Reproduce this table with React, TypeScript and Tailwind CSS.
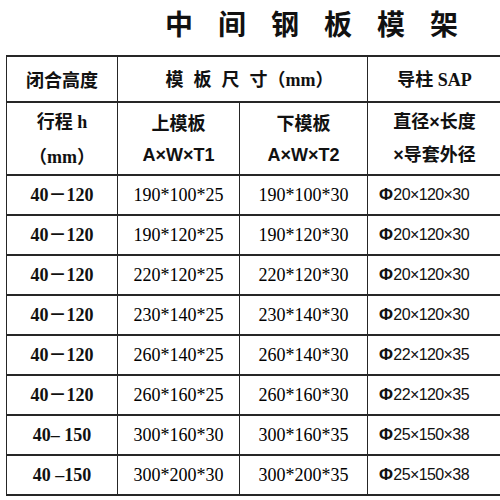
import React from 'react'

interface Row {
  stroke: string;
  upper: string;
  lower: string;
  pin: string;
}

const rows: Row[] = [
  { stroke: '40－120', upper: '190*100*25', lower: '190*100*30', pin: '20×120×30' },
  { stroke: '40－120', upper: '190*120*25', lower: '190*120*30', pin: '20×120×30' },
  { stroke: '40－120', upper: '220*120*25', lower: '220*120*30', pin: '20×120×30' },
  { stroke: '40－120', upper: '230*140*25', lower: '230*140*30', pin: '20×120×30' },
  { stroke: '40－120', upper: '260*140*25', lower: '260*140*30', pin: '22×120×35' },
  { stroke: '40－120', upper: '260*160*25', lower: '260*160*30', pin: '22×120×35' },
  { stroke: '40– 150', upper: '300*160*30', lower: '300*160*35', pin: '25×150×38' },
  { stroke: '40 –150', upper: '300*200*30', lower: '300*200*35', pin: '25×150×38' },
]

const cjk = "font-['Noto_Sans_CJK_SC',sans-serif]"
const serif = "font-['Liberation_Serif','Noto_Sans_CJK_SC',serif]"
const sans = "font-['Liberation_Sans','Noto_Sans_CJK_SC',sans-serif]"

const cell = 'border-x border-y-2 border-[#262626] text-center align-middle p-0'

const App: React.FC = () => {
  return (
    <div className="w-[500px] h-[500px] overflow-hidden bg-white text-[#111]">
      <div className={`h-[55px] pl-[165px] pt-[4px] text-[28px] leading-[38px] font-bold tracking-[25px] whitespace-nowrap ${cjk}`}>
        中间钢板模架
      </div>

      <table className="ml-[6px] w-[500px] table-fixed border-collapse">
        <colgroup>
          <col className="w-[111px]" />
          <col className="w-[122px]" />
          <col className="w-[128px]" />
          <col className="w-[139px]" />
        </colgroup>
        <tbody>
          <tr className="h-[46px]">
            <td className={`${cell} ${cjk} text-[18px] font-bold`}>闭合高度</td>
            <td colSpan={2} className={`${cell} text-[18px] font-bold pl-[14px]`}>
              <span className={`${cjk} tracking-[10px]`}>模板尺</span>
              <span className={cjk}>寸（</span>
              <span className={serif}>mm</span>
              <span className={cjk}>）</span>
            </td>
            <td className={`${cell} text-[18px] font-bold pr-[5px]`}>
              <span className={cjk}>导柱</span>
              <span className={serif}> SAP</span>
            </td>
          </tr>
          <tr className="h-[73px]">
            <td className={`${cell} text-[18px] font-bold leading-[33px]`}>
              <div>
                <span className={cjk}>行程</span>
                <span className={serif}> h</span>
              </div>
              <div>
                <span className={cjk}>（</span>
                <span className={serif}>mm</span>
                <span className={cjk}>）</span>
              </div>
            </td>
            <td className={`${cell} text-[18px] font-bold leading-[33px]`}>
              <div className={cjk}>上模板</div>
              <div className={sans}>A×W×T1</div>
            </td>
            <td className={`${cell} text-[18px] font-bold leading-[33px]`}>
              <div className={cjk}>下模板</div>
              <div className={sans}>A×W×T2</div>
            </td>
            <td className={`${cell} ${sans} text-[18px] font-bold leading-[33px] pr-[5px]`}>
              <div>直径×长度</div>
              <div>×导套外径</div>
            </td>
          </tr>
          {rows.map((r, i) => (
            <tr key={i} className="h-[40px]">
              <td className={`${cell} ${serif} text-[18px] font-bold whitespace-pre`}>{r.stroke}</td>
              <td className={`${cell} ${serif} text-[18px] text-black`}>{r.upper}</td>
              <td className={`${cell} ${serif} text-[18px] text-black`}>{r.lower}</td>
              <td className={`${cell} ${sans} text-[16px] tracking-[-0.6px] text-left pl-[11px]`}>
                <span className="font-bold text-[17px] mr-[1px]">Φ</span>
                {r.pin}
              </td>
            </tr>
          ))}
        </tbody>
      </table>
    </div>
  )
}

export default App
